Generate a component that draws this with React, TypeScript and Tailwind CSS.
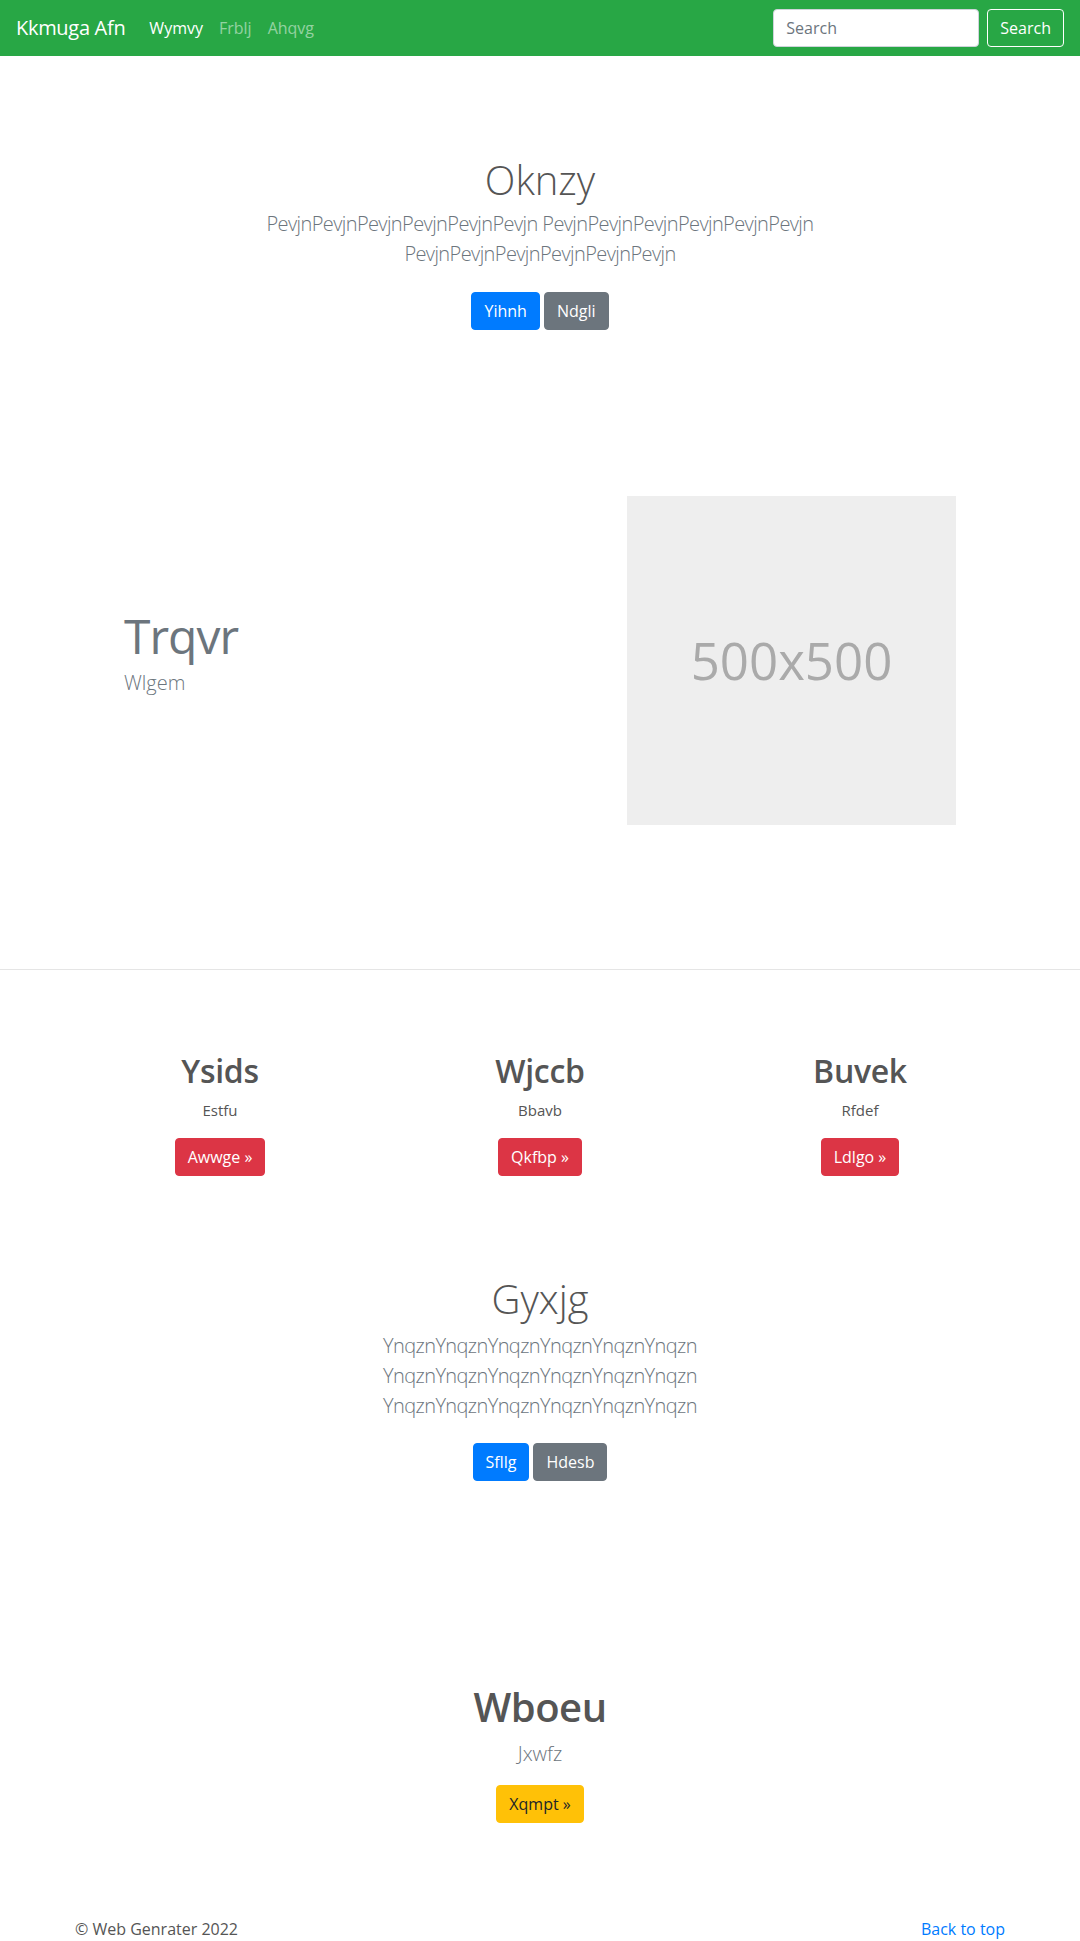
const font = "font-['Segoe_UI','Open_Sans','Liberation_Sans',sans-serif]";

function Btn({ children, tone }: { children: React.ReactNode; tone: "primary" | "secondary" | "danger" | "warning" }) {
  const tones = {
    primary: "border-[#007bff] bg-[#007bff] text-white",
    secondary: "border-[#6c757d] bg-[#6c757d] text-white",
    danger: "border-[#dc3545] bg-[#dc3545] text-white",
    warning: "border-[#ffc107] bg-[#ffc107] text-[#212529]",
  };
  return (
    <a href="#" className={`inline-block rounded border px-3 py-1.5 text-base leading-6 ${tones[tone]}`}>
      {children}
    </a>
  );
}

function Navbar() {
  return (
    <nav className="flex h-14 items-center bg-[#28a745] px-4">
      <a href="#" className="mr-4 text-xl leading-[30px] tracking-[-0.3px] text-white">Kkmuga Afn</a>
      <ul className="flex text-base">
        <li><a href="#" className="px-2 text-white">Wymvy</a></li>
        <li><a href="#" className="px-2 text-white/50">Frblj</a></li>
        <li><a href="#" className="px-2 text-white/50">Ahqvg</a></li>
      </ul>
      <form className="ml-auto flex items-center">
        <input
          type="text"
          placeholder="Search"
          className="mr-2 h-[38px] w-[206px] rounded border border-[#ced4da] bg-white px-3 text-base text-[#495057] placeholder:text-[#6c757d]"
        />
        <button type="button" className="h-[38px] rounded border border-white px-3 text-base text-white">
          Search
        </button>
      </form>
    </nav>
  );
}

function Hero() {
  return (
    <section className="pt-[100px] text-center">
      <h1 className="mb-[5px] text-[40px] leading-[48px] font-light text-[#555]">Oknzy</h1>
      <p className="text-xl leading-[30px] font-light tracking-[-0.6px] text-[#6c757d]">
        <span className="block">PevjnPevjnPevjnPevjnPevjnPevjn PevjnPevjnPevjnPevjnPevjnPevjn</span>
        <span className="block">PevjnPevjnPevjnPevjnPevjnPevjn</span>
      </p>
      <div className="mt-[23px] flex justify-center gap-1">
        <Btn tone="primary">Yihnh</Btn>
        <Btn tone="secondary">Ndgli</Btn>
      </div>
    </section>
  );
}

function Featurette() {
  return (
    <section className="flex items-center px-[124px] pt-[166px] pb-[144px]">
      <div className="flex-1 pb-3">
        <h2 className="text-[48px] leading-[48px] font-normal tracking-[-1px] text-[#6c757d]">Trqvr</h2>
        <p className="mt-2 text-xl leading-[30px] font-light text-[#6c757d]">Wlgem</p>
      </div>
      <div className="flex h-[329px] w-[329px] items-center justify-center bg-[#eee]">
        <span className="text-[51px] text-[#aaa]">500x500</span>
      </div>
    </section>
  );
}

const cols = [
  { title: "Ysids", text: "Estfu", btn: "Awwge »" },
  { title: "Wjccb", text: "Bbavb", btn: "Qkfbp »" },
  { title: "Buvek", text: "Rfdef", btn: "Ldlgo »" },
];

function Columns() {
  return (
    <section className="mx-auto grid w-[960px] grid-cols-3 pt-[82px] text-center">
      {cols.map((c) => (
        <div key={c.title} className="px-[15px]">
          <h2 className="mb-2 text-[32px] leading-[38px] font-semibold tracking-[-0.3px] text-[#555]">{c.title}</h2>
          <p className="mb-4 text-[15px] leading-6 text-[#555]">{c.text}</p>
          <Btn tone="danger">{c.btn}</Btn>
        </div>
      ))}
    </section>
  );
}

function Second() {
  return (
    <section className="pt-[99px] text-center">
      <h1 className="mb-2 text-[40px] leading-[48px] font-light text-[#555]">Gyxjg</h1>
      <p className="text-xl leading-[30px] font-light tracking-[-0.6px] text-[#6c757d]">
        <span className="block">YnqznYnqznYnqznYnqznYnqznYnqzn</span>
        <span className="block">YnqznYnqznYnqznYnqznYnqznYnqzn</span>
        <span className="block">YnqznYnqznYnqznYnqznYnqznYnqzn</span>
      </p>
      <div className="mt-[22px] flex justify-center gap-1">
        <Btn tone="primary">Sfllg</Btn>
        <Btn tone="secondary">Hdesb</Btn>
      </div>
    </section>
  );
}

function Feature() {
  return (
    <section className="pt-[202px] text-center">
      <h2 className="mb-2 text-[40px] leading-[48px] font-semibold tracking-[-0.5px] text-[#555]">Wboeu</h2>
      <p className="mb-4 text-xl leading-[30px] font-light text-[#6c757d]">Jxwfz</p>
      <Btn tone="warning">Xqmpt »</Btn>
    </section>
  );
}

function Footer() {
  return (
    <footer className="mx-auto flex w-[960px] justify-between px-[15px] pt-[94px] pb-12 text-base leading-6">
      <p className="text-[#555]">© Web Genrater 2022</p>
      <a href="#" className="text-[#007bff]">Back to top</a>
    </footer>
  );
}

export default function App() {
  return (
    <div className={`min-h-screen bg-white ${font} text-[#212529]`}>
      <Navbar />
      <Hero />
      <Featurette />
      <hr className="border-t border-[#e5e5e5]" />
      <Columns />
      <Second />
      <Feature />
      <Footer />
    </div>
  );
}
